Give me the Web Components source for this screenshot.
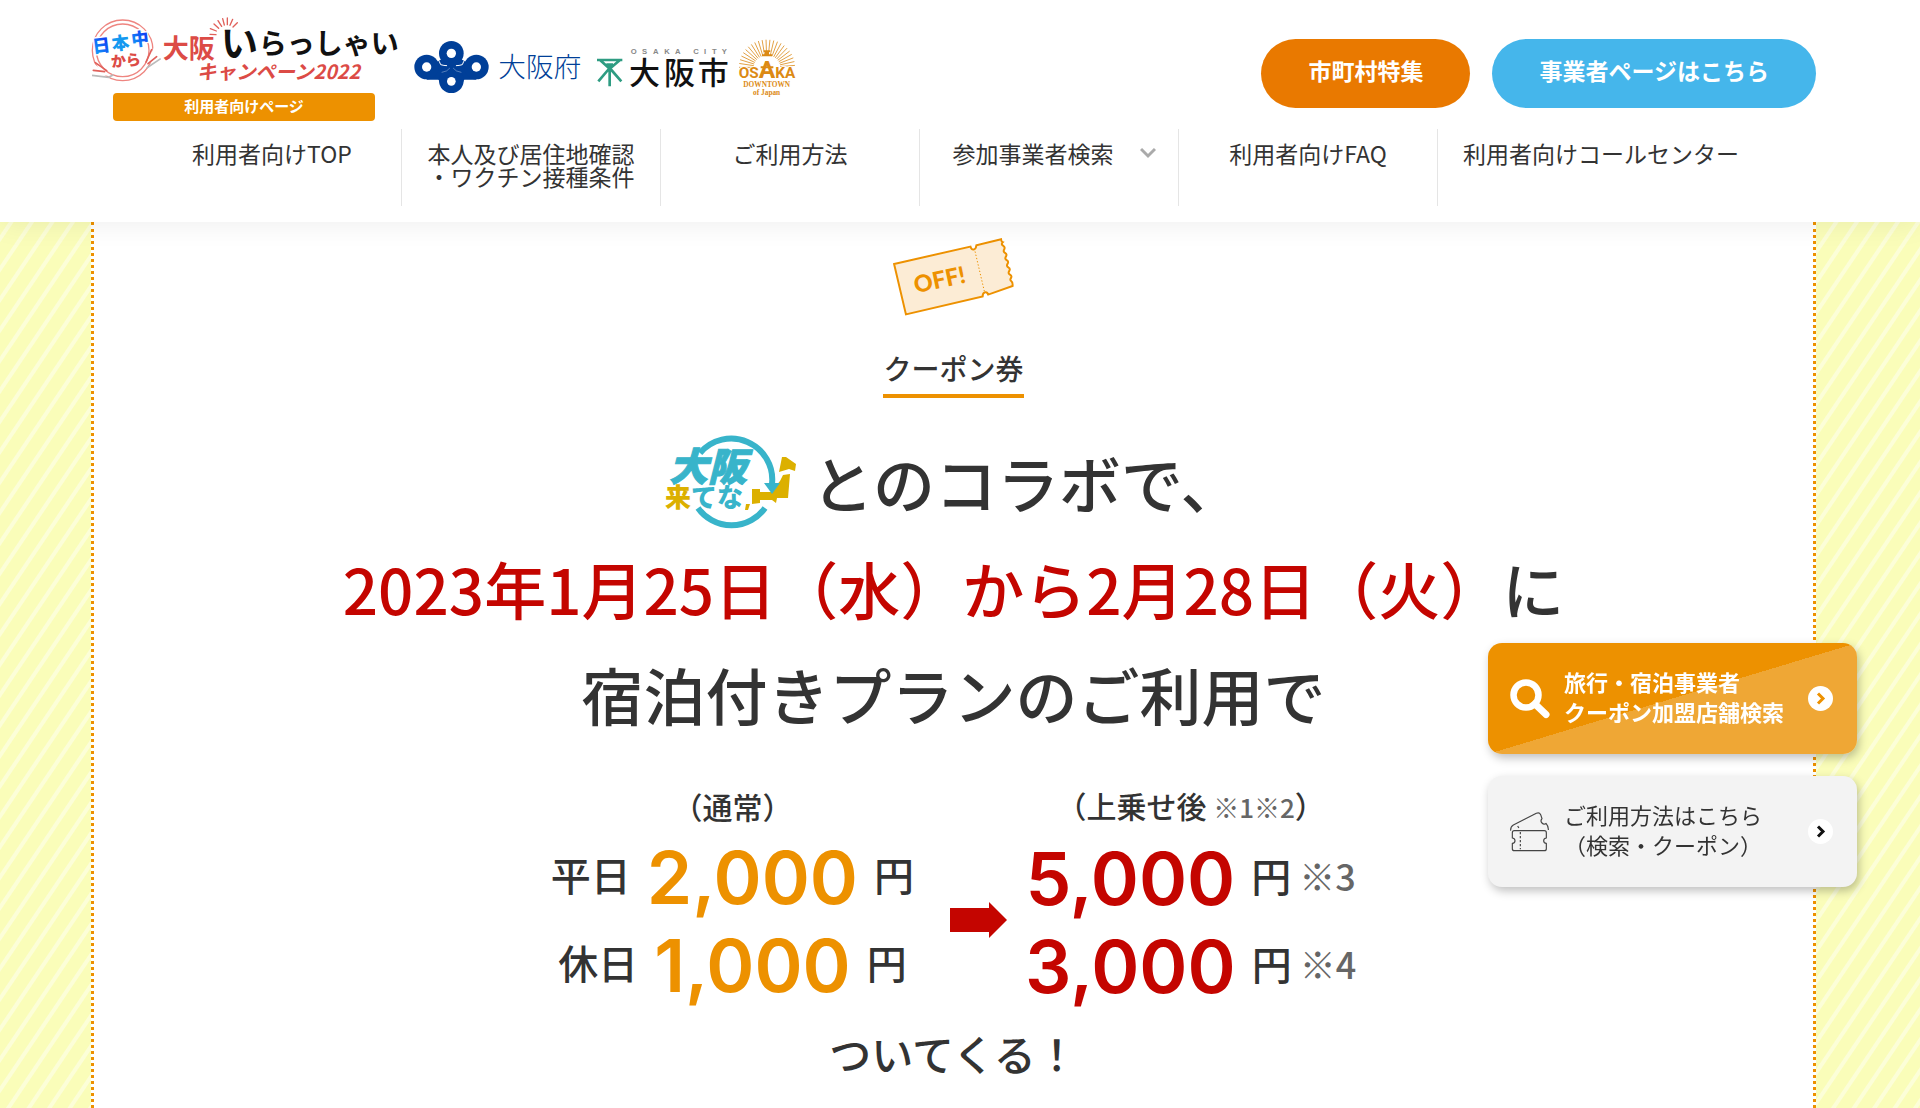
<!DOCTYPE html>
<html lang="ja">
<head>
<meta charset="utf-8">
<meta name="viewport" content="width=device-width, initial-scale=1">
<title>クーポン券 | 大阪いらっしゃいキャンペーン2022</title>
<style>
    body {
        margin: 0;
        font-family: "Noto Sans CJK JP", sans-serif;
        font-weight: 500;
        color: #333;
    }
</style>
</head>
<body>
<campaign-page>
    <site-header slot="header">
        <campaign-logo slot="logos">利用者向けページ</campaign-logo>
        <osaka-pref-logo slot="logos"></osaka-pref-logo>
        <osaka-city-logo slot="logos"></osaka-city-logo>
        <osaka-downtown-logo slot="logos"></osaka-downtown-logo>
        <pill-link slot="actions" color="#e97900">市町村特集</pill-link>
        <pill-link slot="actions" color="#45b6eb">事業者ページはこちら</pill-link>
        <nav-item slot="nav">利用者向けTOP</nav-item>
        <nav-item slot="nav">本人及び居住地確認<br>・ワクチン接種条件</nav-item>
        <nav-item slot="nav">ご利用方法</nav-item>
        <nav-item slot="nav" more>参加事業者検索</nav-item>
        <nav-item slot="nav">利用者向けFAQ</nav-item>
        <nav-item slot="nav">利用者向けコールセンター</nav-item>
    </site-header>
    <coupon-section>
        <span slot="title">クーポン券</span>
        <price-list slot="prices">
            <span slot="title">（通常）</span>
            <price-row label="平日" amount="2,000"></price-row>
            <price-row label="休日" amount="1,000"></price-row>
        </price-list>
        <price-list slot="prices-after" class="after">
            <span slot="title">（上乗せ後 <small>※1※2</small>）</span>
            <price-row amount="5,000" note="※3"></price-row>
            <price-row amount="3,000" note="※4"></price-row>
        </price-list>
    </coupon-section>
    <side-card slot="side" class="search">
        <svg slot="icon" width="40" height="40" viewBox="0 0 40 40" fill="none" stroke="#fff">
            <circle cx="16" cy="16" r="12.500" stroke-width="6.500"/>
            <path d="M25 25L36 35.500" stroke-width="7" stroke-linecap="round"/>
        </svg>
        旅行・宿泊事業者<br>クーポン加盟店舗検索
    </side-card>
    <side-card slot="side">
        <svg slot="icon" width="40" height="40" viewBox="0 0 120 120" fill="none" stroke="#444" stroke-width="3.500" stroke-linejoin="round">
            <path d="M13 56h90q6 0 6 6v16q-8 1-8 8t8 8v16q0 6-6 6h-90q-6 0-6-6v-16q8-1 8-8t-8-8v-16q0-6 6-6z"/>
            <path d="M2 56q-1-12 8-17L79 4q9-4 13 4l4 12q-6 7 0 13t12 1q8 9 7 20"/>
            <path d="M31 60v52M23 42l6 10" stroke-dasharray="7 5"/>
        </svg>
        ご利用方法はこちら<br>（検索・クーポン）
    </side-card>
</campaign-page>

<script>
class BaseElement extends HTMLElement {
    constructor() {
        super();
        const template = document.createElement('template');
        template.innerHTML = this.render();
        this.attachShadow({mode: "open"});
        this.shadowRoot.appendChild(template.content.cloneNode(true));
    }
}

class CampaignPage extends BaseElement {
    render() {
        return `<style>
            :host {
                display: flex;
                flex-direction: column;
                min-height: 100vh;
                background: repeating-linear-gradient(124deg, #fafdb9 0 12px, #fcfed8 13px 16px, #fafdb9 17px);
            }
            main {
                display: flex;
                flex: 1;
                padding: 0 104px 0 91px;
            }
            aside {
                position: fixed;
                top: 643px;
                right: 63px;
                z-index: 3;
                display: flex;
                flex-direction: column;
                gap: 22px;
            }
        </style>
        <slot name="header"></slot>
        <main><slot></slot></main>
        <aside><slot name="side"></slot></aside>`;
    }
}
customElements.define("campaign-page", CampaignPage);

class SiteHeader extends BaseElement {
    render() {
        return `<style>
            :host {
                display: block;
                position: sticky;
                top: 0;
                z-index: 2;
                padding: 15px 0 16px;
                background: #fff;
                box-shadow: 0 0 28px rgba(0, 0, 0, .08);
            }
            .top {
                display: flex;
                justify-content: space-between;
                align-items: center;
                padding: 0 104px 0 90px;
            }
            .logos {
                display: flex;
                align-items: center;
                gap: 16px;
            }
            .actions {
                display: flex;
                gap: 22px;
                margin-top: 10px;
            }
            nav {
                display: grid;
                grid-template-columns: repeat(5, 259fr) 326fr;
                margin-top: 8px;
                padding: 0 156px 0 143px;
            }
        </style>
        <div class="top">
            <div class="logos"><slot name="logos"></slot></div>
            <div class="actions"><slot name="actions"></slot></div>
        </div>
        <nav><slot name="nav"></slot></nav>`;
    }
}
customElements.define("site-header", SiteHeader);

class CampaignLogo extends BaseElement {
    render() {
        return `<style>
            :host {
                display: flex;
                flex-direction: column;
                align-items: center;
                gap: 8px;
            }
            svg {
                display: block;
                overflow: visible;
            }
            a {
                width: 262px;
                padding-bottom: 2px;
                border-radius: 4px;
                background: #ed9100;
                color: #fff;
                font-size: 15px;
                font-weight: 700;
                line-height: 26px;
                text-align: center;
                text-decoration: none;
            }
        </style>
        <svg width="308" height="70" viewBox="30 45 924 210" font-weight="900" fill="#dc4b46">
            <defs>
                <linearGradient id="blue" x1="0" x2="1" y1="1" y2="0">
                    <stop offset="0" stop-color="#12b4fa"/>
                    <stop offset="1" stop-color="#1218f0"/>
                </linearGradient>
            </defs>
            <g fill="none" stroke="#ee8580" stroke-width="4">
                <circle cx="128" cy="151" r="91"/>
                <circle cx="128" cy="151" r="79"/>
            </g>
            <path d="M34 186L90 226 38 230zM198 196L222 142 242 168z" fill="#fff"/>
            <path d="M36 226l50 6 14-8M200 204l42-28" fill="none" stroke="#bbb" stroke-width="5"/>
            <g fill="none" stroke="#e0605a" stroke-width="5" stroke-linecap="round">
                <path d="M46 188l34 24M40 211l34 4M198 186l17-37M204 191l26-21"/>
                <path d="M390 103l18 1M391 86l18 7M402 72l14 13M414 62l11 17M428 56l5 19M442 54v20M458 58l-8 18M472 68l-13 13" stroke-width="4"/>
            </g>
            <g stroke="#fff" stroke-width="8" paint-order="stroke" text-anchor="middle">
                <g fill="url(#blue)" font-size="53">
                    <text transform="translate(66 156) rotate(-7)">日</text>
                    <text transform="translate(124 148) rotate(-7)" fill="#1499f0">本</text>
                    <text transform="translate(182 136) rotate(-7)">中</text>
                </g>
                <text transform="translate(139 198) rotate(-5)" font-size="45">から</text>
            </g>
            <text x="248" y="173" font-size="78" font-weight="700">大阪</text>
            <g fill="#111" font-weight="700">
                <text x="422" y="170" font-size="112">い</text>
                <text x="536" y="161" font-size="84">らっしゃい</text>
            </g>
            <text x="350" y="238" font-size="59" font-style="italic" font-weight="700">キャンペーン2022</text>
        </svg>
        <a href="#"><slot></slot></a>`;
    }
}
customElements.define("campaign-logo", CampaignLogo);

class OsakaPrefLogo extends BaseElement {
    render() {
        return `<style>
            :host {
                display: block;
                margin-bottom: 3px;
            }
            svg {
                display: block;
                overflow: visible;
            }
        </style>
        <svg width="167" height="52" viewBox="42 60 501 156" fill="#003f98">
            <path d="M80 138L154 100 229 138 192 176 190 182H118L116 176z"/>
            <path d="M80 150h149v26H80z"/>
            <circle cx="80" cy="138" r="37"/>
            <circle cx="154" cy="97" r="37"/>
            <circle cx="154" cy="179" r="37"/>
            <circle cx="229" cy="138" r="37"/>
            <g fill="none" stroke="#fff" stroke-linecap="round">
                <path d="M112 112q8 12 10 19 10 3 18 3M197 112q-8 12-10 19-10 3-18 3" stroke-width="3"/>
                <path d="M126 154q16-2 23-12M183 154q-16-2-23-12" stroke-width="1"/>
            </g>
            <g fill="#fff">
                <circle cx="80" cy="138" r="14"/>
                <circle cx="154" cy="97" r="14"/>
                <circle cx="154" cy="181" r="13"/>
                <circle cx="229" cy="138" r="14"/>
            </g>
            <text x="295" y="169" font-size="83" font-weight="300">大阪府</text>
        </svg>`;
    }
}
customElements.define("osaka-pref-logo", OsakaPrefLogo);

class OsakaCityLogo extends BaseElement {
    render() {
        return `<style>
            :host { display: block; }
            svg {
                display: block;
                overflow: visible;
            }
        </style>
        <svg width="131" height="40" viewBox="593 86 393 120">
            <path d="M593 122h76M602 122l29 26 31-26M631 132v69M631 146l-34 40M631 146l35 40M621 136h20" fill="none" stroke="#2e9c82" stroke-width="8"/>
            <text x="694 728 761 795 827 870 882 914 938 967" y="104" font-family="Liberation Sans, sans-serif" font-size="23" font-weight="700" fill="#888">OSAKA CITY</text>
            <text x="689 794 895" y="194" font-size="93" font-weight="500" fill="#111">大阪市</text>
        </svg>`;
    }
}
customElements.define("osaka-city-logo", OsakaCityLogo);

class OsakaDowntownLogo extends BaseElement {
    render() {
        // sunburst behind the tower
        let rays = "";
        for (let deg = -180; deg <= 0; deg += 8) {
            const c = Math.cos(deg * Math.PI / 180), s = Math.sin(deg * Math.PI / 180);
            rays += `M${(1099 + 40 * c).toFixed(1)} ${(143 + 36 * s).toFixed(1)}L${(1099 + 84 * c).toFixed(1)} ${(143 + 83 * s).toFixed(1)}`;
        }
        return `<style>
            :host {
                display: block;
                margin-left: -6px;
            }
            svg {
                display: block;
                overflow: visible;
            }
        </style>
        <svg width="58" height="58" viewBox="1012 58 174 174" fill="#dc8a14">
            <path d="${rays}" stroke="#e3a245" stroke-width="3"/>
            <text x="1099" y="174" font-family="Roboto, sans-serif" font-size="46" font-weight="700" stroke="#fff" stroke-width="5" paint-order="stroke" text-anchor="middle">OS<tspan font-size="74">A</tspan>KA</text>
            <path d="M1089 92h20v5h-4v7h9v6h-30v-6h9v-7h-4zM1080 140h38v6h-38z"/>
            <g font-family="Liberation Serif, serif" font-weight="700" text-anchor="middle">
                <text x="1098" y="201" font-size="22">DOWNTOWN</text>
                <text x="1098" y="226" font-size="22">of Japan</text>
            </g>
        </svg>`;
    }
}
customElements.define("osaka-downtown-logo", OsakaDowntownLogo);

class PillLink extends BaseElement {
    render() {
        return `<style>
            :host { display: block; }
            a {
                display: block;
                padding: 0 47px 6px;
                border-radius: 35px;
                color: #fff;
                font-size: 23px;
                font-weight: 700;
                line-height: 63px;
                text-decoration: none;
            }
        </style>
        <a href="#"><slot></slot></a>`;
    }
    connectedCallback() {
        this.shadowRoot.querySelector("a").style.background = this.getAttribute("color");
    }
}
customElements.define("pill-link", PillLink);

class NavItem extends BaseElement {
    render() {
        return `<style>
            :host {
                display: block;
                min-height: 77px;
                box-sizing: border-box;
                border-right: 1px solid #e5e5e5;
            }
            :host(:last-child) { border-right: 0; }
            a {
                display: flex;
                justify-content: center;
                gap: 26px;
                padding-top: 13px;
                color: #333;
                font-size: 23px;
                font-weight: 400;
                line-height: 23px;
                text-decoration: none;
                white-space: nowrap;
            }
            svg { display: none; }
            :host([more]) a { padding-left: 10px; }
            :host([more]) svg { display: block; }
        </style>
        <a href="#"><span><slot></slot></span><svg width="16" height="20" viewBox="0 0 16 20" fill="none" stroke="#aaa" stroke-width="3"><path d="M1 7l7 7 7-7"/></svg></a>`;
    }
}
customElements.define("nav-item", NavItem);

class CouponSection extends BaseElement {
    render() {
        return `<style>
            :host {
                display: flex;
                flex: 1;
                flex-direction: column;
                align-items: center;
                padding: 16px 0 20px;
                background: #fff;
                border: 3px dotted #ed9100;
                border-width: 0 3px;
            }
            h2 {
                margin: 32px 0 0;
                padding-bottom: 6px;
                border-bottom: 4px solid #ed9100;
                font-size: 28px;
                font-weight: 500;
                line-height: 40px;
            }
            .lead {
                margin: 31px 0 0;
                font-size: 62px;
                line-height: 106px;
                text-align: center;
            }
            .collab {
                display: flex;
                align-items: center;
                justify-content: center;
                gap: 16px;
            }
            em {
                color: #c40500;
                font-style: normal;
            }
            .prices {
                display: flex;
                align-items: center;
                margin-top: 38px;
            }
            .arrow {
                margin: 44px 18px 0 36px;
            }
            .closing {
                margin: 12px 0 0;
                font-size: 42px;
                line-height: 60px;
            }
        </style>
        <svg width="122" height="78" viewBox="97 55 370 237">
            <path d="M100 134L332 81q3 11 10 9t8-13L425 59q1 8 5 9-6 6 1 10t4 11q-5 7 2 11t3 11q-5 7 2 11t3 11q-5 7 2 11t3 11q-5 7 2 11t3 11q-4 6 1 9t4 15L386 227q-3-9-10-7t-7 13L136 287z" fill="#fcecd5" stroke="#ed9100" stroke-width="6"/>
            <path d="M346 96L374 216" stroke="#ed9100" stroke-width="3" stroke-dasharray="4 6"/>
            <text transform="translate(166 223) rotate(-12)" font-family="Lato, sans-serif" font-size="71" font-weight="900" fill="#ed9100">OFF!</text>
        </svg>
        <h2><slot name="title"></slot></h2>
        <div class="lead">
            <div class="collab">
                <svg width="131" height="89" viewBox="0 0 131 89" font-weight="900" fill="#38b4ca" overflow="visible">
                    <g fill="none" stroke="#38b4ca" stroke-width="6">
                        <path d="M35 15A41 41 0 0 1 107 46"/>
                        <path d="M33 70A41 41 0 0 0 100 70"/>
                    </g>
                    <path d="M117 19h4l10 7-1 7-6-2-10 3zM118 37l7-1-2 24h-11l-1 5-4-3H95V54h11l9-11zM87 51h8v4h6v4h-6v6l-8 1z" fill="#dcb000"/>
                    <path d="M99 45h16l-8 11z"/>
                    <text x="4" y="43" font-size="39" font-style="italic" stroke="#38b4ca" stroke-width="1">大阪</text>
                    <text x="0" y="69" font-size="26"><tspan fill="#dcb000">来</tspan>てな</text>
                    <path d="M81 66h4l-2 6h-3z" fill="#dcb000"/>
                </svg>
                <span>とのコラボで、</span>
            </div>
            <em>2023年1月25日（水）から2月28日（火）</em>に<br>
            宿泊付きプランのご利用で
        </div>
        <div class="prices">
            <slot name="prices"></slot>
            <svg class="arrow" width="57" height="36" viewBox="0 0 57 36"><path d="M0 6h39V0l18 18-18 18v-6H0z" fill="#c40500"/></svg>
            <slot name="prices-after"></slot>
        </div>
        <p class="closing">ついてくる！</p>`;
    }
}
customElements.define("coupon-section", CouponSection);

class PriceList extends BaseElement {
    render() {
        return `<style>
            :host {
                --price-color: #ed9100;
                display: flex;
                flex-direction: column;
                align-items: center;
            }
            :host(.after) { --price-color: #c40500; }
            .title {
                margin-bottom: 8px;
                font-size: 30px;
                line-height: 40px;
            }
            ::slotted(price-row) { height: 88px; }
        </style>
        <div class="title"><slot name="title"></slot></div>
        <slot></slot>`;
    }
    connectedCallback() {
        const small = this.querySelector("small");
        if (small) {
            small.style.fontSize = "26px";
            small.style.color = "#666";
        }
    }
}
customElements.define("price-list", PriceList);

class PriceRow extends BaseElement {
    render() {
        return `<style>
            :host {
                display: flex;
                align-items: center;
                gap: 16px;
                font-size: 40px;
                line-height: 60px;
            }
            span { padding-bottom: 8px; }
            span:empty { display: none; }
            .amount {
                padding: 0;
                color: var(--price-color);
                font-family: Inter, sans-serif;
                font-size: 73px;
                font-weight: 600;
            }
            .note {
                margin-left: -8px;
                color: #666;
                font-size: 36px;
            }
        </style>
        <span class="label"></span><span class="amount"></span><span>円</span><span class="note"></span>`;
    }
    connectedCallback() {
        ["label", "amount", "note"].forEach(name => {
            this.shadowRoot.querySelector("." + name).textContent = this.getAttribute(name) || "";
        });
    }
}
customElements.define("price-row", PriceRow);

class SideCard extends BaseElement {
    render() {
        return `<style>
            :host {
                display: block;
                --arrow-color: #111;
            }
            :host(.search) { --arrow-color: #ed9100; }
            a {
                display: flex;
                align-items: center;
                gap: 14px;
                min-width: 369px;
                min-height: 111px;
                padding: 0 24px 0 22px;
                box-sizing: border-box;
                border-radius: 14px;
                background: #f3f3f3;
                box-shadow: 2px 4px 10px rgba(0, 0, 0, .25);
                color: #333;
                font-size: 22px;
                font-weight: 400;
                line-height: 30px;
                text-decoration: none;
            }
            :host(.search) a {
                background: linear-gradient(to bottom right, #ed9100 50%, #efa735 50%);
                color: #fff;
                font-weight: 700;
            }
            .text {
                flex: 1;
                padding-bottom: 6px;
            }
            .arrow { flex: none; }
        </style>
        <a href="#">
            <slot name="icon"></slot>
            <span class="text"><slot></slot></span>
            <svg class="arrow" width="25" height="25" viewBox="0 0 25 25"><circle cx="12.500" cy="12.500" r="12.500" fill="#fff"/><path d="M10 7.500l5 5-5 5" fill="none" stroke="var(--arrow-color)" stroke-width="3"/></svg>
        </a>`;
    }
}
customElements.define("side-card", SideCard);
</script>
</body>
</html>
